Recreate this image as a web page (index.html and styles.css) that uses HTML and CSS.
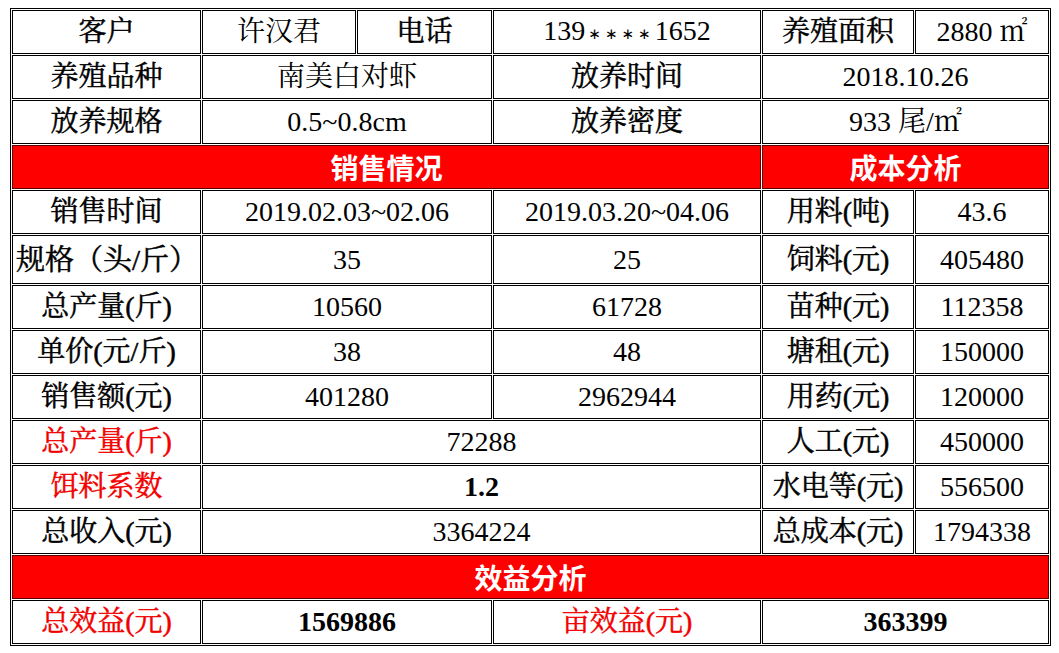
FILE: index.html
```html
<!DOCTYPE html>
<html lang="zh-CN">
<head>
<meta charset="utf-8">
<title>养殖效益分析</title>
<link rel="stylesheet" href="styles.css">
</head>
<body>
<table class="sheet">
  <colgroup>
    <col class="c1"><col class="c2"><col class="c3"><col class="c4"><col class="c5"><col class="c6">
  </colgroup>
  <tbody>
    <tr>
      <td class="lbl">客户</td>
      <td>许汉君</td>
      <td class="lbl">电话</td>
      <td>139<span class="stars">∗∗∗∗</span>1652</td>
      <td class="lbl">养殖面积</td>
      <td>2880 ㎡</td>
    </tr>
    <tr>
      <td class="lbl">养殖品种</td>
      <td colspan="2">南美白对虾</td>
      <td class="lbl">放养时间</td>
      <td colspan="2">2018.10.26</td>
    </tr>
    <tr>
      <td class="lbl">放养规格</td>
      <td colspan="2">0.5~0.8cm</td>
      <td class="lbl">放养密度</td>
      <td colspan="2">933 尾/㎡</td>
    </tr>
    <tr>
      <td class="head" colspan="4">销售情况</td>
      <td class="head" colspan="2">成本分析</td>
    </tr>
    <tr>
      <td class="lbl">销售时间</td>
      <td colspan="2">2019.02.03~02.06</td>
      <td>2019.03.20~04.06</td>
      <td class="lbl">用料(吨)</td>
      <td>43.6</td>
    </tr>
    <tr class="tall">
      <td class="lbl left">规格（头/斤）</td>
      <td colspan="2">35</td>
      <td>25</td>
      <td class="lbl">饲料(元)</td>
      <td>405480</td>
    </tr>
    <tr>
      <td class="lbl">总产量(斤)</td>
      <td colspan="2">10560</td>
      <td>61728</td>
      <td class="lbl">苗种(元)</td>
      <td>112358</td>
    </tr>
    <tr>
      <td class="lbl">单价(元/斤)</td>
      <td colspan="2">38</td>
      <td>48</td>
      <td class="lbl">塘租(元)</td>
      <td>150000</td>
    </tr>
    <tr>
      <td class="lbl">销售额(元)</td>
      <td colspan="2">401280</td>
      <td>2962944</td>
      <td class="lbl">用药(元)</td>
      <td>120000</td>
    </tr>
    <tr>
      <td class="lbl red">总产量(斤)</td>
      <td colspan="3">72288</td>
      <td class="lbl">人工(元)</td>
      <td>450000</td>
    </tr>
    <tr>
      <td class="lbl red">饵料系数</td>
      <td colspan="3" class="strong">1.2</td>
      <td class="lbl">水电等(元)</td>
      <td>556500</td>
    </tr>
    <tr>
      <td class="lbl">总收入(元)</td>
      <td colspan="3">3364224</td>
      <td class="lbl">总成本(元)</td>
      <td>1794338</td>
    </tr>
    <tr>
      <td class="head" colspan="6">效益分析</td>
    </tr>
    <tr>
      <td class="lbl red">总效益(元)</td>
      <td colspan="2" class="strong">1569886</td>
      <td class="lbl red">亩效益(元)</td>
      <td colspan="2" class="strong">363399</td>
    </tr>
  </tbody>
</table>
</body>
</html>
```

FILE: styles.css
```css
html, body {
  margin: 0;
  padding: 0;
  background: #ffffff;
}

body {
  padding: 8px 0 0 10px;
  font-family: "Liberation Serif", "Noto Serif CJK SC", "Noto Sans CJK SC", serif;
  color: #000000;
}

.sheet {
  table-layout: fixed;
  border-collapse: separate;
  border-spacing: 1px;
  border: 1px solid #000000;
  width: 1041px;
}

.c1 { width: 189px; }
.c2 { width: 154px; }
.c3 { width: 135px; }
.c4 { width: 268px; }
.c5 { width: 152px; }
.c6 { width: 134px; }

.sheet td {
  box-sizing: border-box;
  height: 44px;
  padding: 0;
  border: 1px solid #000000;
  text-align: center;
  vertical-align: middle;
  font-size: 28px;
  line-height: 30px;
  white-space: nowrap;
  overflow: hidden;
}

.sheet tr.tall td {
  height: 49px;
}

.sheet td.lbl {
  -webkit-text-stroke: 0.5px currentColor;
}

.sheet td.left {
  text-align: left;
  padding-left: 3px;
  font-size: 29px;
}

.sheet td.red {
  color: #f20000;
}

.sheet td.strong {
  font-weight: bold;
}

.sheet td.head {
  background: #ff0000;
  color: #ffffff;
  font-family: "Noto Sans CJK SC", sans-serif;
  font-weight: bold;
  font-size: 28px;
  border-color: #5a0000;
}

.stars {
  font-family: "DejaVu Sans", sans-serif;
  font-size: 15px;
  letter-spacing: 4px;
  padding-left: 3px;
  vertical-align: 1px;
}
```
